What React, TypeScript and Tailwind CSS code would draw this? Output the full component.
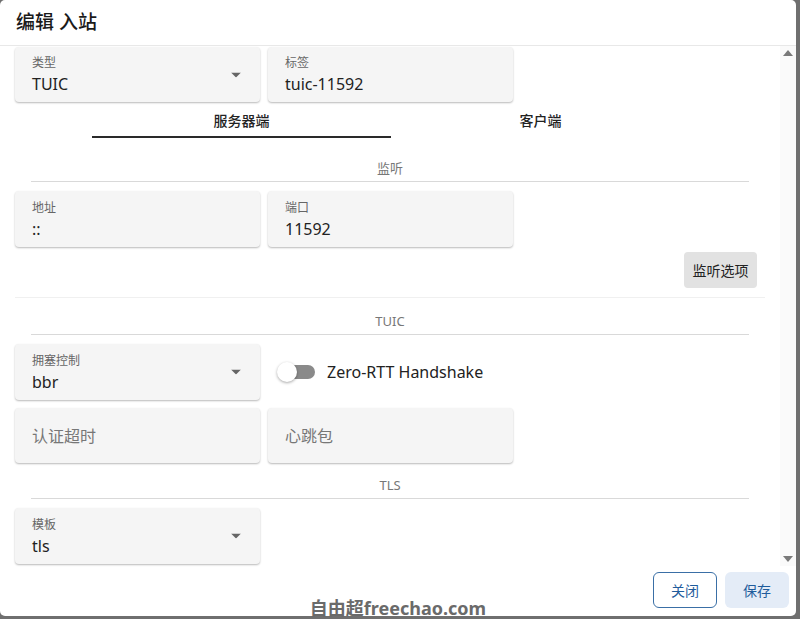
const font = {
  fontFamily: '"Noto Sans", "Noto Sans CJK SC", sans-serif',
};

const Caret = () => (
  <svg viewBox="0 0 10 5" className="h-[5px] w-[10px] fill-[#666]">
    <path d="M0 0h10L5 5z" />
  </svg>
);

const Field = ({
  label,
  value,
  select,
  placeholder,
}: {
  label?: string;
  value?: string;
  select?: boolean;
  placeholder?: string;
}) => (
  <div className="relative flex h-full w-[245px] flex-col justify-center rounded-[4px] bg-[#f5f5f5] pl-[17px] shadow-[0_1px_2px_rgba(0,0,0,0.28)]">
    {placeholder ? (
      <span className="text-[16px] text-[#777]">{placeholder}</span>
    ) : (
      <>
        <span className="text-[12px] leading-[16px] text-[#666]">{label}</span>
        <span className="mt-[3px] text-[16px] leading-[20px] text-[#222]">{value}</span>
      </>
    )}
    {select ? (
      <span className="absolute right-[19px] top-1/2 -translate-y-1/2">
        <Caret />
      </span>
    ) : null}
  </div>
);

const Divider = ({ text }: { text: string }) => (
  <div className="mx-[16px] flex h-full flex-col items-center justify-end">
    <span className="text-[13px] leading-[18px] text-[#777]">{text}</span>
    <div className="mt-[4px] h-px w-full bg-[#d9d9d9]" />
  </div>
);

export default function App() {
  return (
    <div className="h-[619px] w-[800px] overflow-hidden bg-[#6f6f6f]" style={font}>
      <div className="relative flex h-[616px] w-[796px] flex-col rounded-[5px] bg-white">
        <div className="flex h-[46px] shrink-0 items-center border-b border-[#e8e8e8] pl-[16px]">
          <h1 className="text-[19px] font-medium text-[#1a1a1a]">编辑 入站</h1>
        </div>

        <div className="flex h-[520px] shrink-0">
          <div className="flex w-[780px] flex-col pl-[15px]">
            <div className="mt-[1px] flex h-[55px] gap-[8px]">
              <Field label="类型" value="TUIC" select />
              <Field label="标签" value="tuic-11592" />
            </div>

            <div className="ml-[77px] flex h-[36px] w-[598px]">
              <div className="flex flex-1 flex-col items-center justify-end">
                <span className="text-[14px] font-medium text-[#222]">服务器端</span>
                <div className="mt-[5px] h-[2px] w-full bg-[#2a2a2a]" />
              </div>
              <div className="flex flex-1 flex-col items-center justify-end">
                <span className="text-[14px] font-medium text-[#222]">客户端</span>
                <div className="mt-[5px] h-[2px] w-full bg-transparent" />
              </div>
            </div>

            <div className="h-[44px] w-[750px]">
              <Divider text="监听" />
            </div>

            <div className="mt-[9px] flex h-[56px] gap-[8px]">
              <Field label="地址" value="::" />
              <Field label="端口" value="11592" />
            </div>

            <div className="flex w-[742px] justify-end pt-[5px]">
              <button className="h-[36px] w-[73px] rounded-[4px] bg-[#e2e2e2] text-[14px] text-[#222]">
                监听选项
              </button>
            </div>
            <div className="mt-[9px] h-px w-[750px] bg-[#f0f0f0]" />

            <div className="h-[37px] w-[750px]">
              <Divider text="TUIC" />
            </div>

            <div className="mt-[9px] flex h-[56px] items-center gap-[17px]">
              <Field label="拥塞控制" value="bbr" select />
              <div className="flex items-center gap-[12px]">
                <div className="relative h-[20px] w-[38px]">
                  <div className="absolute left-[6px] top-[3px] h-[14px] w-[32px] rounded-full bg-[#8a8a8a]" />
                  <div className="absolute left-0 top-0 h-[20px] w-[20px] rounded-full bg-white shadow-[0_1px_3px_rgba(0,0,0,0.35)]" />
                </div>
                <span className="text-[16px] text-[#222]">Zero-RTT Handshake</span>
              </div>
            </div>

            <div className="mt-[8px] flex h-[55px] gap-[8px]">
              <Field placeholder="认证超时" />
              <Field placeholder="心跳包" />
            </div>

            <div className="h-[36px] w-[750px]">
              <Divider text="TLS" />
            </div>

            <div className="mt-[9px] flex h-[56px] gap-[8px]">
              <Field label="模板" value="tls" select />
            </div>
          </div>

          <div className="flex w-[16px] flex-col items-center justify-between bg-[#fafafa] py-[4px]">
            <svg viewBox="0 0 10 6" className="h-[6px] w-[10px] fill-[#7a7a7a]">
              <path d="M0 6h10L5 0z" />
            </svg>
            <svg viewBox="0 0 10 6" className="h-[6px] w-[10px] fill-[#7a7a7a]">
              <path d="M0 0h10L5 6z" />
            </svg>
          </div>
        </div>

        <div className="flex flex-1 items-start justify-end gap-[8px] pr-[7px] pt-[6px]">
          <button className="h-[36px] w-[64px] rounded-[6px] border border-[#3a6fa6] text-[14px] text-[#1f5c9c]">
            关闭
          </button>
          <button className="h-[36px] w-[64px] rounded-[6px] bg-[#e4ecf7] text-[14px] text-[#1f5c9c]">
            保存
          </button>
        </div>

        <div className="absolute left-0 right-0 top-[597px] flex justify-center">
          <span className="text-[18px] font-bold leading-[22px] text-[#6a6a6a]">
            自由超freechao.com
          </span>
        </div>
      </div>
    </div>
  );
}
